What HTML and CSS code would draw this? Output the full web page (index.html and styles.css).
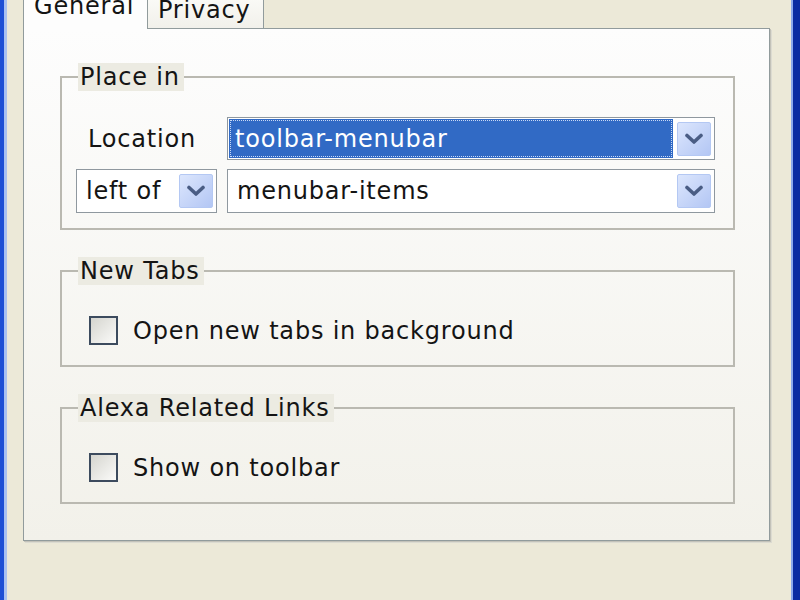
FILE: index.html
```html
<!DOCTYPE html>
<html>
<head>
<meta charset="utf-8">
<link rel="stylesheet" href="styles.css">
</head>
<body>
<div class="window">
  <div class="frame-left"></div>
  <div class="client">
    <div class="tabs">
      <div class="tab tab-active">General</div>
      <div class="tab">Privacy</div>
    </div>
    <div class="panel">
      <fieldset class="group group-place">
        <legend>Place in</legend>
        <div class="place-grid">
          <div class="label">Location</div>
          <div class="combo">
            <div class="value value-selected"><span>toolbar-menubar</span></div>
            <div class="drop">
              <svg width="20" height="12" viewBox="0 0 20 12"><path d="M3 2.5 L10 9 L17 2.5" fill="none" stroke="#4a5d84" stroke-width="3.6" stroke-linecap="round" stroke-linejoin="round"/></svg>
            </div>
          </div>
          <div class="combo">
            <div class="value">left of</div>
            <div class="drop">
              <svg width="20" height="12" viewBox="0 0 20 12"><path d="M3 2.5 L10 9 L17 2.5" fill="none" stroke="#4a5d84" stroke-width="3.6" stroke-linecap="round" stroke-linejoin="round"/></svg>
            </div>
          </div>
          <div class="combo">
            <div class="value">menubar-items</div>
            <div class="drop">
              <svg width="20" height="12" viewBox="0 0 20 12"><path d="M3 2.5 L10 9 L17 2.5" fill="none" stroke="#4a5d84" stroke-width="3.6" stroke-linecap="round" stroke-linejoin="round"/></svg>
            </div>
          </div>
        </div>
      </fieldset>
      <fieldset class="group">
        <legend>New Tabs</legend>
        <div class="check-row"><span class="checkbox"></span><span>Open new tabs in background</span></div>
      </fieldset>
      <fieldset class="group">
        <legend>Alexa Related Links</legend>
        <div class="check-row"><span class="checkbox"></span><span>Show on toolbar</span></div>
      </fieldset>
    </div>
  </div>
  <div class="frame-right"></div>
</div>
</body>
</html>
```
FILE: styles.css
```css
html, body {
  margin: 0;
  padding: 0;
  width: 800px;
  height: 600px;
  overflow: hidden;
  background: #ECE9D8;
  font-family: "DejaVu Sans", Verdana, sans-serif;
  font-size: 24px;
  letter-spacing: 0.8px;
  color: #141414;
}

.window {
  display: flex;
  height: 600px;
}

.frame-left {
  width: 3px;
  border-left: 4px solid #1E4FD4;
  background: #A9C1F1;
}

.frame-right {
  width: 7px;
  border-left: 2px solid #8CA9EC;
  background: #0B2CA2;
}

.client {
  flex: 1;
  background: #ECE9D8;
  padding: 0 19px 0 16px;
  display: flex;
  flex-direction: column;
}

.tabs {
  display: flex;
  align-items: flex-end;
  margin-top: -10px;
  margin-bottom: -1px;
  height: 39px;
}

.tab {
  box-sizing: border-box;
  height: 35px;
  width: 116px;
  padding: 6px 0 0 10px;
  line-height: 18px;
  border: 1px solid #919B9C;
  border-bottom: none;
  border-left: none;
  background: linear-gradient(#fbfbf8, #f1f0ea);
}

.tab-active {
  position: relative;
  z-index: 1;
  height: 39px;
  width: 125px;
  padding-top: 6px;
  border-left: 1px solid #919B9C;
  background: #FDFDFD;
}

.panel {
  box-sizing: border-box;
  height: 513px;
  width: 747px;
  border: 1px solid #919B9C;
  box-shadow: 1px 1px 0 #c3c2b9, 2px 2px 0 #dcdbd1;
  background: linear-gradient(#FDFDFD, #F2F1EA);
  padding: 34px 0 0 36px;
}

.group {
  box-sizing: border-box;
  width: 675px;
  margin: 0 0 27px 0;
  padding: 0 0 20px 27px;
  border: 2px solid #BAB9B1;
  min-width: 0;
}

.group legend {
  margin-left: -11px;
  padding: 0 4px 0 2px;
  height: 28px;
  line-height: 28px;
  background: #ECEBE2;
}

.group-place {
  padding: 26px 18px 15px 14px;
}

.group-place legend {
  margin-left: 2px;
}

.place-grid {
  display: grid;
  grid-template-columns: 141px 1fr;
  grid-template-rows: 43px 44px;
  column-gap: 10px;
  row-gap: 9px;
}

.label {
  padding-left: 12px;
  display: flex;
  align-items: center;
}

.combo {
  box-sizing: border-box;
  display: flex;
  align-items: center;
  border: 1px solid #8F989F;
  background: #FFFFFF;
  padding: 1px 3px 1px 1px;
}

.value {
  flex: 1;
  align-self: stretch;
  display: flex;
  align-items: center;
  padding-left: 8px;
  white-space: nowrap;
}

.value-selected {
  background: #316AC5;
  color: #FFFFFF;
  outline: 1px dotted #c9d8f4;
  outline-offset: -2px;
  padding-left: 6px;
}

.drop {
  box-sizing: border-box;
  width: 34px;
  height: 34px;
  margin-left: 4px;
  border: 1px solid #B4C8F3;
  border-radius: 2px;
  background: linear-gradient(135deg, #DCE6FD, #B3C6F4);
  display: flex;
  align-items: center;
  justify-content: center;
}

.check-row {
  display: flex;
  align-items: center;
  gap: 15px;
  height: 29px;
  padding-top: 31px;
}

.checkbox {
  box-sizing: border-box;
  width: 29px;
  height: 29px;
  border: 2px solid #3C4B5E;
  background: linear-gradient(135deg, #D5D5CF, #FBFBF9);
}
```
